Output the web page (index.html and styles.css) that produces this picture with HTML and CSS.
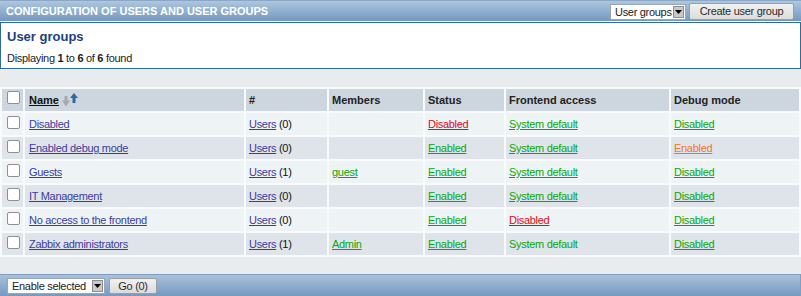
FILE: index.html
```html
<!DOCTYPE html>
<html>
<head>
<meta charset="utf-8">
<link rel="stylesheet" href="styles.css">
</head>
<body>
<div class="topbar">
  <div class="topbar-title">CONFIGURATION OF USERS AND USER GROUPS</div>
  <div class="topbar-controls">
    <div class="sel sel-top"><span class="sel-text">User groups</span><span class="sel-arrow"><svg width="7" height="4" viewBox="0 0 7 4"><path d="M0 0H7L3.5 4Z" fill="#000"/></svg></span></div>
    <div class="btn btn-create">Create user group</div>
  </div>
</div>
<div class="box">
  <div class="box-title">User groups</div>
  <div class="box-info">Displaying <b>1</b> to <b>6</b> of <b>6</b> found</div>
</div>
<div class="gap-top"></div>
<table class="list">
  <colgroup>
    <col class="c-cb"><col class="c-name"><col class="c-num"><col class="c-mem"><col class="c-st"><col class="c-fe"><col class="c-dbg">
  </colgroup>
  <thead>
    <tr>
      <th class="cb"><span class="chk"></span></th>
      <th><span class="sortlink">Name</span><svg class="sorticon" width="17" height="14" viewBox="0 0 17 14"><path d="M2.5 3H5.5V7.5H8L4 13.5L0 7.5H2.5Z" fill="#a8a8a8"/><path d="M10.5 10H13.5V5H16L12 0L8 5H10.5Z" fill="#2d68ad"/></svg></th>
      <th>#</th>
      <th>Members</th>
      <th>Status</th>
      <th>Frontend access</th>
      <th>Debug mode</th>
    </tr>
  </thead>
  <tbody>
    <tr class="odd">
      <td class="cb"><span class="chk"></span></td>
      <td><a class="lnk">Disabled</a></td>
      <td><a class="lnk">Users</a> (0)</td>
      <td></td>
      <td><a class="red">Disabled</a></td>
      <td><a class="green">System default</a></td>
      <td><a class="green">Disabled</a></td>
    </tr>
    <tr class="even">
      <td class="cb"><span class="chk"></span></td>
      <td><a class="lnk">Enabled debug mode</a></td>
      <td><a class="lnk">Users</a> (0)</td>
      <td></td>
      <td><a class="green">Enabled</a></td>
      <td><a class="green">System default</a></td>
      <td><a class="orange">Enabled</a></td>
    </tr>
    <tr class="odd">
      <td class="cb"><span class="chk"></span></td>
      <td><a class="lnk">Guests</a></td>
      <td><a class="lnk">Users</a> (1)</td>
      <td><a class="green">guest</a></td>
      <td><a class="green">Enabled</a></td>
      <td><a class="green">System default</a></td>
      <td><a class="green">Disabled</a></td>
    </tr>
    <tr class="even">
      <td class="cb"><span class="chk"></span></td>
      <td><a class="lnk">IT Management</a></td>
      <td><a class="lnk">Users</a> (0)</td>
      <td></td>
      <td><a class="green">Enabled</a></td>
      <td><a class="green">System default</a></td>
      <td><a class="green">Disabled</a></td>
    </tr>
    <tr class="odd">
      <td class="cb"><span class="chk"></span></td>
      <td><a class="lnk">No access to the frontend</a></td>
      <td><a class="lnk">Users</a> (0)</td>
      <td></td>
      <td><a class="green">Enabled</a></td>
      <td><a class="red">Disabled</a></td>
      <td><a class="green">Disabled</a></td>
    </tr>
    <tr class="even">
      <td class="cb"><span class="chk"></span></td>
      <td><a class="lnk">Zabbix administrators</a></td>
      <td><a class="lnk">Users</a> (1)</td>
      <td><a class="green">Admin</a></td>
      <td><a class="green">Enabled</a></td>
      <td><span class="green-plain">System default</span></td>
      <td><a class="green">Disabled</a></td>
    </tr>
  </tbody>
</table>
<div class="gap-bottom"></div>
<div class="footbar">
  <div class="sel sel-foot"><span class="sel-text">Enable selected</span><span class="sel-arrow"><svg width="7" height="4" viewBox="0 0 7 4"><path d="M0 0H7L3.5 4Z" fill="#000"/></svg></span></div>
  <div class="btn btn-go">Go (0)</div>
</div>
</body>
</html>
```
FILE: styles.css
```css
html, body {
  margin: 0;
  padding: 0;
}
body {
  background: #e8ecef;
  font-family: "Liberation Sans", Arial, sans-serif;
  font-size: 11px;
  letter-spacing: -0.3px;
  color: #111;
  width: 801px;
  height: 296px;
  overflow: hidden;
}
.topbar {
  height: 20px;
  background: linear-gradient(#afc6dd, #7398c0);
  border-top: 1px solid #8aa7c6;
  display: flex;
  align-items: center;
  justify-content: space-between;
  padding: 0 7px 0 6px;
  border-bottom: 1px solid #ffffff;
}
.topbar-title {
  color: #ffffff;
  font-weight: bold;
  font-size: 11px;
  letter-spacing: 0;
}
.topbar-controls {
  display: flex;
  align-items: center;
  gap: 3px;
}
.sel {
  box-sizing: border-box;
  height: 16px;
  background: #fff;
  border: 1px solid #9aa7b4;
  display: flex;
  align-items: center;
  justify-content: space-between;
  padding: 0 1px 0 4px;
  color: #222;
  font-size: 11px;
  white-space: nowrap;
  overflow: hidden;
}
.sel-text {
  white-space: nowrap;
}
.sel-top {
  width: 76px;
  margin-top: 1px;
}
.sel-arrow {
  flex: none;
  width: 11px;
  height: 12px;
  background: #c9c9c9;
  border: 1px solid #8e8e8e;
  box-sizing: border-box;
  display: flex;
  align-items: center;
  justify-content: center;
}
.btn {
  box-sizing: border-box;
  height: 17px;
  border: 1px solid #9e9e9e;
  border-radius: 2px;
  background: linear-gradient(#f1f1f1, #dcdcdc);
  color: #2a2a2a;
  font-size: 11px;
  display: flex;
  align-items: center;
  justify-content: center;
  white-space: nowrap;
}
.btn-create {
  width: 105px;
}
.box {
  background: #fff;
  border: 1px solid #2f6ba3;
  height: 45px;
  padding: 0 6px;
}
.box-title {
  font-size: 13px;
  font-weight: bold;
  letter-spacing: 0;
  color: #213f80;
  padding-top: 6px;
  line-height: 16px;
}
.box-info {
  padding-top: 6px;
  line-height: 14px;
  color: #1c1c1c;
}
.gap-top {
  height: 18px;
}
.list {
  width: 801px;
  table-layout: fixed;
  border-collapse: separate;
  border-spacing: 2px;
  background: #f9fafb;
}
.c-cb { width: 21px; }
.c-name { width: 219px; }
.c-num { width: 81px; }
.c-mem { width: 94px; }
.c-st { width: 79px; }
.c-fe { width: 163px; }
.c-dbg { width: 128px; }
.list th, .list td {
  height: 22px;
  padding: 0 0 0 3px;
  box-sizing: border-box;
  text-align: left;
  vertical-align: middle;
  white-space: nowrap;
  overflow: hidden;
}
.list th {
  background: #cdd5de;
  font-weight: bold;
  letter-spacing: 0;
  color: #222;
  font-size: 11px;
}
.list th:nth-child(2),
.list td:nth-child(2) {
  padding-left: 4px;
}
.list .cb {
  vertical-align: top;
  padding: 3px 0 0 5px;
}
.list th.cb {
  padding-top: 2px;
}
.list tr.odd td {
  background: #eef3f6;
}
.list tr.even td {
  background: #dfe4eb;
}
.chk {
  display: block;
  width: 11px;
  height: 11px;
  border: 1px solid #8f8f8f;
  border-radius: 2px;
  background: #fff;
}
.sortlink {
  color: #111;
  text-decoration: underline;
}
.sorticon {
  vertical-align: -3px;
  margin-left: 3px;
}
a {
  text-decoration: underline;
  cursor: pointer;
}
.lnk {
  color: #3c3c9c;
}
.green,
.green-plain {
  color: #06a80a;
}
.red {
  color: #df0a20;
}
.orange {
  color: #ec7a1c;
}
.gap-bottom {
  height: 17px;
}
.footbar {
  box-sizing: border-box;
  height: 22px;
  border-top: 1px solid #7f9ec1;
  border-right: 1px solid #7f9ec1;
  background: linear-gradient(#a8c1dc, #7599c1);
  display: flex;
  align-items: center;
  padding: 0 0 0 7px;
  gap: 4px;
}
.sel-foot {
  width: 98px;
}
.btn-go {
  width: 48px;
  height: 16px;
}
```
